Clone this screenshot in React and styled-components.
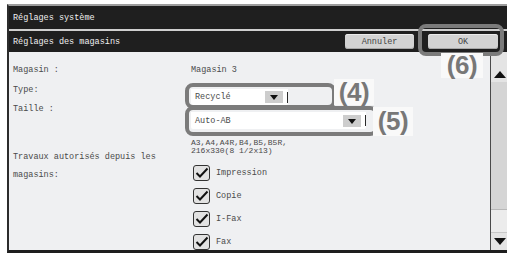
import React from "react"
import styled, { createGlobalStyle } from "styled-components"

const GlobalStyle = createGlobalStyle`
  html, body {
    margin: 0;
    padding: 0;
    background: #ffffff;
  }
  body {
    font-family: "Liberation Mono", "DejaVu Sans Mono", monospace;
  }
`

const Screen = styled.div`
  position: relative;
  width: 507px;
  height: 253px;
  overflow: hidden;
  padding: 4px 0 0 7px;
  box-sizing: border-box;
`

const Frame = styled.div`
  display: flex;
  flex-direction: column;
  width: 500px;
  border-top: 2px solid #9c9c9c;
  border-left: 2px solid #2c2c2c;
  border-bottom: 3px solid #1e1e1e;
  background: #eff0f2;
`

const TitleBar = styled.div`
  display: flex;
  align-items: center;
  height: 23px;
  padding-left: 4px;
  background: #1f1f1f;
  border-bottom: 2px solid #cfcfcf;
  color: #f0f0f0;
  font-size: 8.5px;
`

const SubBar = styled(TitleBar)`
  height: 21px;
  border-bottom: none;
  justify-content: space-between;
  padding-right: 11px;
`

const Actions = styled.div`
  display: flex;
  align-items: center;
  gap: 14px;
`

const Button = styled.div`
  display: flex;
  align-items: center;
  justify-content: center;
  width: ${({ $w }) => $w}px;
  height: 15px;
  border-radius: 3px;
  background: #d3d3d3;
  box-shadow: inset 0 -1px 0 #a8a8a8, inset 0 1px 0 #ececec;
  color: #444;
  font-size: 8.5px;
`

const Body = styled.div`
  display: flex;
  height: 198px;
`

const Content = styled.div`
  flex: 1;
  display: flex;
  flex-direction: column;
  padding: 13px 0 0 4px;
  color: #4a4a4a;
  font-size: 8.5px;
  line-height: 10px;
`

const Row = styled.div`
  display: grid;
  grid-template-columns: 178px 1fr;
  margin-top: ${({ $mt }) => $mt || 0}px;
`

const Label = styled.div`
  margin-top: ${({ $mt }) => $mt || 0}px;
  width: ${({ $w }) => ($w ? `${$w}px` : "auto")};
  line-height: ${({ $lh }) => $lh || 10}px;
`

const Value = styled.div`
  margin-top: ${({ $mt }) => $mt || 0}px;
  min-width: 0;
`

const Select = styled.div`
  display: flex;
  align-items: center;
  width: ${({ $w }) => $w}px;
  height: ${({ $h }) => $h}px;
  background: #ffffff;
  border-radius: 0 0 2px 2px;
`

const SelectText = styled.span`
  flex: 1;
  padding-left: 4px;
`

const DropBtn = styled.div`
  display: flex;
  align-items: center;
  justify-content: center;
  width: 18px;
  height: 12px;
  margin-right: 4px;
  background: #cdcdcd;
  &::after {
    content: "";
    border-left: 4px solid transparent;
    border-right: 4px solid transparent;
    border-top: 5px solid #111;
    margin-top: 1px;
  }
`

const Divider = styled.div`
  width: 1px;
  height: 11px;
  background: #2a2a2a;
`

const SizeList = styled.div`
  font-size: 8px;
  line-height: 8px;
  white-space: pre;
`

const Checks = styled.div`
  display: flex;
  flex-direction: column;
  gap: 7px;
  padding: 17px 0 0 2px;
`

const CheckRow = styled.div`
  display: flex;
  align-items: center;
  gap: 6px;
`

const Box = styled.div`
  width: 15px;
  height: 14px;
  border: 1.5px solid #333;
  border-radius: 3px;
  background: #e2e2e2;
  display: flex;
  align-items: center;
  justify-content: center;
`

const Scrollbar = styled.div`
  display: flex;
  flex-direction: column;
  width: 18px;
  border-left: 1px solid #4a4a4a;
  background: #ececec;
`

const ScrollBtn = styled.div`
  display: flex;
  align-items: ${({ $up }) => ($up ? "flex-end" : "center")};
  justify-content: center;
  height: ${({ $h }) => $h}px;
  padding-bottom: ${({ $up }) => ($up ? 4 : 0)}px;
  box-sizing: border-box;
  background: #e4e4e4;
  &::after {
    content: "";
    border-left: 6px solid transparent;
    border-right: 6px solid transparent;
    ${({ $up }) =>
      $up ? "border-bottom: 7px solid #111;" : "border-top: 7px solid #111;"}
  }
`

const Thumb = styled.div`
  height: 127px;
  background: #d5d5d5;
  border-bottom: 1px solid #b8b8b8;
`

const Track = styled.div`
  flex: 1;
  background: #ececec;
  border-bottom: 1px solid #c8c8c8;
`

const Outline = styled.div`
  position: absolute;
  left: ${({ $x }) => $x}px;
  top: ${({ $y }) => $y}px;
  width: ${({ $w }) => $w}px;
  height: ${({ $h }) => $h}px;
  border: 4px solid #7b7b7b;
  border-radius: 8px;
  box-sizing: border-box;
`

const Tag = styled.div`
  position: absolute;
  left: ${({ $x }) => $x}px;
  top: ${({ $y }) => $y}px;
  width: ${({ $w }) => $w}px;
  height: ${({ $h }) => $h}px;
  display: flex;
  align-items: center;
  justify-content: center;
  background: #f9f9f9;
  color: #777777;
  font-family: "Liberation Sans", Arial, sans-serif;
  font-weight: 700;
  font-size: 26px;
  letter-spacing: -0.5px;
`

const Check = () => (
  <svg width="14" height="12" viewBox="0 0 14 12">
    <path d="M1.5 6 L5 9.5 L12.5 1.5" fill="none" stroke="#111" strokeWidth="2" />
  </svg>
)

const jobs = ["Impression", "Copie", "I-Fax", "Fax"]

export default function App() {
  return (
    <>
      <GlobalStyle />
      <Screen>
        <Frame>
          <TitleBar>Réglages système</TitleBar>
          <SubBar>
            <span>Réglages des magasins</span>
            <Actions>
              <Button $w={69}>Annuler</Button>
              <Button $w={70}>OK</Button>
            </Actions>
          </SubBar>
          <Body>
            <Content>
              <Row>
                <Label>Magasin :</Label>
                <Value>Magasin 3</Value>
              </Row>
              <Row $mt={10}>
                <Label>Type:</Label>
                <Value $mt={4}>
                  <Select $w={97} $h={16}>
                    <SelectText>Recyclé</SelectText>
                    <DropBtn />
                    <Divider />
                  </Select>
                </Value>
              </Row>
              <Row>
                <Label $mt={-1}>Taille :</Label>
                <Value $mt={7}>
                  <Select $w={175} $h={17}>
                    <SelectText>Auto-AB</SelectText>
                    <DropBtn />
                    <Divider />
                  </Select>
                </Value>
              </Row>
              <Row $mt={10}>
                <span />
                <SizeList>{"A3,A4,A4R,B4,B5,B5R,\n216x330(8 1/2x13)"}</SizeList>
              </Row>
              <Row $mt={-7}>
                <Label $w={150} $lh={18}>
                  Travaux autorisés depuis les magasins:
                </Label>
                <Checks>
                  {jobs.map((job) => (
                    <CheckRow key={job}>
                      <Box>
                        <Check />
                      </Box>
                      <span>{job}</span>
                    </CheckRow>
                  ))}
                </Checks>
              </Row>
            </Content>
            <Scrollbar>
              <ScrollBtn $up $h={30} />
              <Thumb />
              <Track />
              <ScrollBtn $h={17} />
            </Scrollbar>
          </Body>
        </Frame>
        <Outline $x={418} $y={24} $w={86} $h={32} />
        <Outline $x={185} $y={83} $w={151} $h={26} />
        <Outline $x={185} $y={106} $w={193} $h={30} />
        <Tag $x={441} $y={53} $w={42} $h={25}>(6)</Tag>
        <Tag $x={334} $y={79} $w={40} $h={26}>(4)</Tag>
        <Tag $x={373} $y={107} $w={40} $h={29}>(5)</Tag>
      </Screen>
    </>
  )
}
